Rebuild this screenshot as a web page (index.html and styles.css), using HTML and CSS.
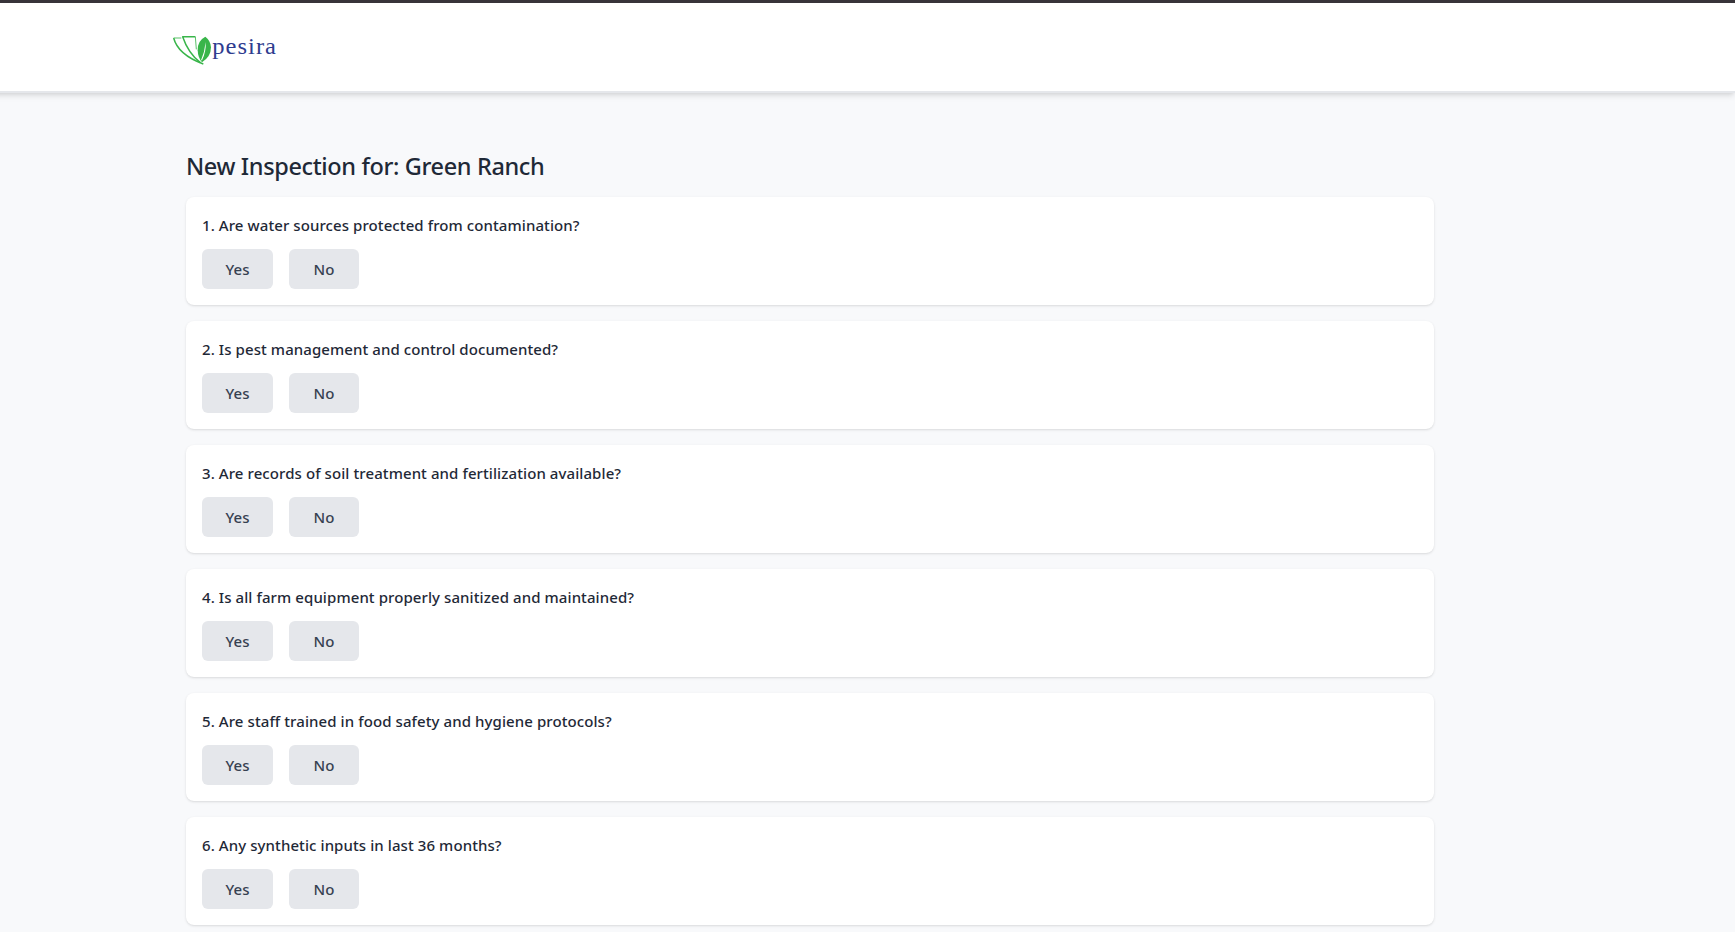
FILE: index.html
```html
<!DOCTYPE html>
<html lang="en">
<head>
<meta charset="utf-8">
<title>New Inspection</title>
<link rel="stylesheet" href="styles.css">
</head>
<body>
<header class="header">
  <svg class="logo" viewBox="0 0 390 180" role="img" aria-label="pesira">
    <g fill="none" stroke="#39b54a" stroke-linejoin="round">
      <path stroke-width="2.5" d="M64 54 L41 54"/>
      <path stroke-width="4.5" d="M41 54 Q54 104 130 132"/>
      <path stroke-width="2.5" d="M109 88 L106 50"/>
      <path stroke-width="4.5" d="M106 50 L68 50 Q84 98 121 128"/>
    </g>
    <path fill="#39b54a" d="M136 50 Q112 62 113 91 Q114 114 126 127 Q153 110 153 82 Q152 62 136 50Z"/>
    <path fill="#fff" d="M137 66 Q134 96 123 121 L126 121 Q139 94 137 66Z"/>
    <text class="wordmark" x="157" y="102" textLength="194" lengthAdjust="spacingAndGlyphs">pesira</text>
  </svg>
</header>
<main class="page">
  <h1 class="title">New Inspection for: Green Ranch</h1>
  <div class="questions">
    <section class="card"><p class="question">1. Are water sources protected from contamination?</p><div class="answers"><button class="answer answer-yes">Yes</button><button class="answer">No</button></div></section>
    <section class="card"><p class="question">2. Is pest management and control documented?</p><div class="answers"><button class="answer answer-yes">Yes</button><button class="answer">No</button></div></section>
    <section class="card"><p class="question">3. Are records of soil treatment and fertilization available?</p><div class="answers"><button class="answer answer-yes">Yes</button><button class="answer">No</button></div></section>
    <section class="card"><p class="question">4. Is all farm equipment properly sanitized and maintained?</p><div class="answers"><button class="answer answer-yes">Yes</button><button class="answer">No</button></div></section>
    <section class="card"><p class="question">5. Are staff trained in food safety and hygiene protocols?</p><div class="answers"><button class="answer answer-yes">Yes</button><button class="answer">No</button></div></section>
    <section class="card"><p class="question">6. Any synthetic inputs in last 36 months?</p><div class="answers"><button class="answer answer-yes">Yes</button><button class="answer">No</button></div></section>
  </div>
</main>
</body>
</html>
```
FILE: styles.css
```css
* { box-sizing: border-box; margin: 0; padding: 0; }
html { height: 100%; overflow: hidden; }
body {
  height: 932px;
  overflow: hidden;
  background: #f8f9fb;
  border-top: 3px solid #38343a;
  color: #1f2937;
  font-family: "Segoe UI", "Noto Sans", "Open Sans", sans-serif;
}
.header {
  height: 90px;
  margin-left: -16px;
  padding: 17px 0 0 176px;
  background: #fff;
  border-bottom: 2px solid #e5e7eb;
  box-shadow: 0 4px 6px -1px rgba(0, 0, 0, .1), 0 2px 4px -2px rgba(0, 0, 0, .1);
}
.logo { display: block; width: 130px; height: 60px; }
.wordmark { font: 72px "Liberation Serif", serif; letter-spacing: 3px; fill: #2e3c8f; }
.page { width: 1248px; margin-left: 186px; padding-top: 57px; }
.title { margin-bottom: 15px; font-size: 23.5px; font-weight: 500; line-height: 32px; letter-spacing: -.37px; }
.questions { display: flex; flex-direction: column; gap: 16px; }
.card {
  padding: 16px;
  background: #fff;
  border-radius: 8px;
  box-shadow: 0 1px 3px rgba(0, 0, 0, .1), 0 1px 2px -1px rgba(0, 0, 0, .1);
}
.question { margin-bottom: 12px; font-size: 15px; font-weight: 500; line-height: 24px; letter-spacing: .085px; }
.answers { display: flex; gap: 16px; }
.answer {
  width: 70px;
  height: 40px;
  border: 0;
  border-radius: 6px;
  background: #e5e7eb;
  color: #374151;
  font: 500 15px/24px "Segoe UI", "Noto Sans", "Open Sans", sans-serif;
}
.answer-yes { width: 71px; }
```
